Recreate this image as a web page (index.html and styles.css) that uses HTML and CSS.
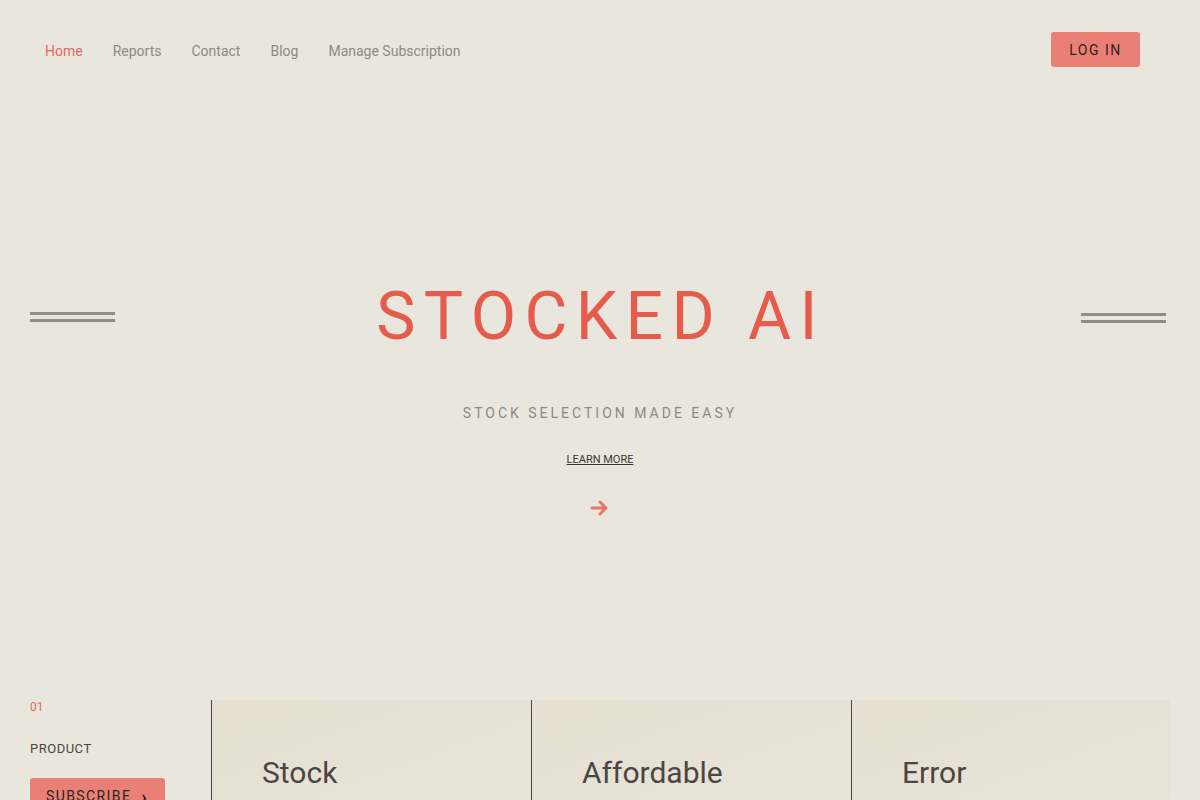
FILE: index.html
```html
<!DOCTYPE html>
<html lang="en">
<head>
<meta charset="utf-8">
<title>Stocked AI</title>
<link rel="stylesheet" href="styles.css">
</head>
<body>
<header class="topbar">
  <nav class="nav">
    <a class="nav-link active" href="#">Home</a>
    <a class="nav-link" href="#">Reports</a>
    <a class="nav-link" href="#">Contact</a>
    <a class="nav-link" href="#">Blog</a>
    <a class="nav-link" href="#">Manage Subscription</a>
  </nav>
  <a class="login" href="#">LOG IN</a>
</header>

<section class="hero">
  <div class="hero-row">
    <span class="bars"></span>
    <h1 class="title">STOCKED AI</h1>
    <span class="bars bars-right"></span>
  </div>
  <p class="subtitle">STOCK SELECTION MADE EASY</p>
  <a class="learn" href="#">LEARN MORE</a>
  <svg class="arrow" width="20" height="18" viewBox="0 0 20 18" aria-hidden="true">
    <path d="M2 9h14M10 3l6 6-6 6" fill="none" stroke="#e8776a" stroke-width="3" stroke-linecap="round" stroke-linejoin="round"/>
  </svg>
</section>

<section class="features">
  <div class="intro">
    <span class="num">01</span>
    <span class="label">PRODUCT</span>
    <a class="subscribe" href="#">SUBSCRIBE <span class="chev">&#x203A;</span></a>
  </div>
  <div class="card"><h2 class="card-title">Stock</h2></div>
  <div class="card"><h2 class="card-title">Affordable</h2></div>
  <div class="card"><h2 class="card-title">Error</h2></div>
</section>
</body>
</html>
```
FILE: styles.css
```css
html, body {
  margin: 0;
  padding: 0;
  background: #e9e6dd;
  font-family: Roboto, "Noto Sans", sans-serif;
  overflow: hidden;
}
a { text-decoration: none; }

.topbar {
  display: flex;
  align-items: center;
  justify-content: space-between;
  padding: 32px 60px 0 45px;
  height: 35px;
}
.nav { display: flex; gap: 30px; padding-top: 2px; }
.nav-link {
  font-size: 14px;
  color: #8c8a83;
}
.nav-link.active { color: #e26a5c; }
.login {
  display: flex;
  align-items: center;
  justify-content: center;
  width: 89px;
  height: 35px;
  background: #ea8075;
  border-radius: 3px;
  color: #2a2422;
  font-size: 14px;
  letter-spacing: 1.5px;
}

.hero {
  display: flex;
  flex-direction: column;
  align-items: center;
  padding-top: 217px;
}
.hero-row {
  width: 100%;
  box-sizing: border-box;
  display: flex;
  align-items: center;
  justify-content: space-between;
  padding: 0 34px 0 30px;
  height: 66px;
}
.bars {
  width: 85px;
  height: 10px;
  border-top: 3px solid #8f8d87;
  border-bottom: 3px solid #8f8d87;
  box-sizing: border-box;
  margin-top: 0;
}
.bars-right { margin-top: 2px; }
.title {
  margin: 0 0 0 6px;
  font-weight: 400;
  font-size: 66px;
  letter-spacing: 8.4px;
  color: #e55c4d;
  line-height: 66px;
}
.subtitle {
  margin: 55px 0 0;
  font-size: 14px;
  letter-spacing: 3px;
  color: #8c8a83;
}
.learn {
  margin-top: 32px;
  font-size: 11px;
  color: #3a3633;
  text-decoration: underline;
}
.arrow { margin-top: 33px; }

.features {
  display: grid;
  grid-template-columns: 181px 320px 320px 319px;
  padding: 0 30px;
  margin-top: 183px;
}
.intro {
  display: flex;
  flex-direction: column;
  align-items: flex-start;
}
.num {
  font-size: 12px;
  color: #e26a5c;
}
.label {
  margin-top: 27px;
  font-size: 13px;
  letter-spacing: 0.5px;
  color: #4a4643;
}
.subscribe {
  margin-top: 22px;
  display: flex;
  align-items: center;
  gap: 10px;
  height: 36px;
  padding: 0 17px 0 16px;
  background: #ea8075;
  border-radius: 3px;
  color: #2a2422;
  font-size: 14px;
  letter-spacing: 1.4px;
}
.chev { font-weight: 700; font-size: 18px; }
.card {
  border-left: 1px solid #4a4542;
  background: linear-gradient(160deg, #e6dfd2 0%, #e8e3d8 60%, #e9e5db 100%);
  height: 140px;
  padding: 55px 0 0 50px;
}
.card-title {
  margin: 0;
  font-weight: 400;
  font-size: 30px;
  color: #4a4643;
}
```
